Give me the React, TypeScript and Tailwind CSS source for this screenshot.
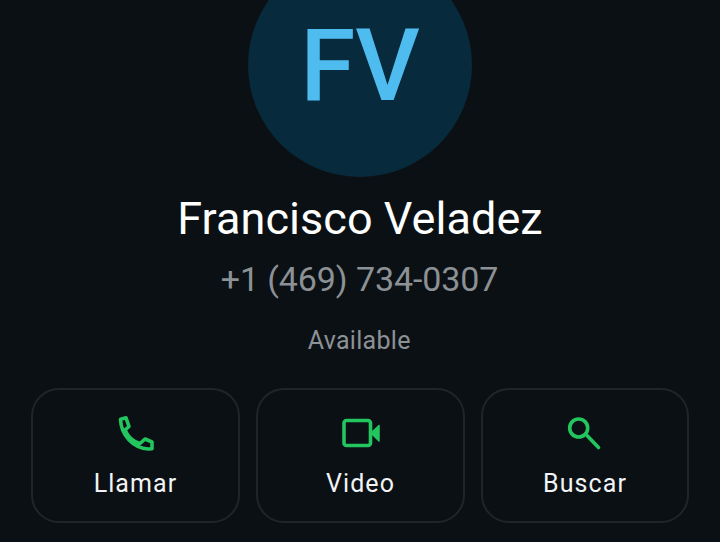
import React from "react";

function Btn({ label, children }: { label: string; children: React.ReactNode }) {
  return (
    <div className="flex h-[135px] flex-col items-center rounded-[28px] border-2 border-[#212529] pt-[25px]">
      <div className="h-[40px] w-[40px]">{children}</div>
      <span className="mt-[13px] text-[25px] leading-[32px] tracking-[1.1px] text-[#f1f3f4]">{label}</span>
    </div>
  );
}

export default function App() {
  return (
    <div className="flex h-[542px] w-[720px] flex-col items-center overflow-hidden bg-[#0b1014] font-['Roboto',sans-serif]">
      <div className="mt-[-47px] flex h-[224px] w-[224px] shrink-0 items-center justify-center rounded-full bg-[#082a3d] pt-[2px]">
        <span className="text-[100px] font-medium leading-none text-[#4fbcf0]">FV</span>
      </div>
      <div className="mt-[16px] text-[45px] leading-[52px] tracking-[0.05px] text-white">Francisco Veladez</div>
      <div className="mt-[12px] pr-[1px] text-[34px] leading-[44px] tracking-[-0.1px] text-[#8c9196]">+1 (469) 734-0307</div>
      <div className="mt-[24px] pr-[1.5px] text-[25px] leading-[32px] tracking-[0.3px] text-[#8c9196]">Available</div>
      <div className="mt-[31px] grid w-[658px] grid-cols-[209px_209px_208px] gap-[16px]">
        <Btn label="Llamar">
          <svg viewBox="0 0 40 40" className="h-full w-full" fill="none" stroke="#22c55e" strokeWidth="3.600" strokeLinecap="round" strokeLinejoin="round">
            <path d="M4.500 4.200L10 2.800l3 8.700-4 3.500C12 22 18 27 24 28.500l5-4.500 7 3v6.800l-3.500.200C17 33 5 20 4.500 4.200z" />
          </svg>
        </Btn>
        <Btn label="Video">
          <svg viewBox="0 0 40 40" className="h-full w-full" fill="none" stroke="#22c55e" strokeWidth="3.600" strokeLinejoin="round">
            <rect x="3" y="5.500" width="26.500" height="25" rx="2.500" />
            <path d="M30 18l8-7.500V26z" fill="#22c55e" strokeWidth="1.500" />
          </svg>
        </Btn>
        <Btn label="Buscar">
          <svg viewBox="0 0 40 40" className="h-full w-full" fill="none" stroke="#22c55e" strokeWidth="3.600" strokeLinecap="round">
            <circle cx="13.700" cy="13" r="9" />
            <path d="M22.500 21l11 11.500" />
          </svg>
        </Btn>
      </div>
    </div>
  );
}
